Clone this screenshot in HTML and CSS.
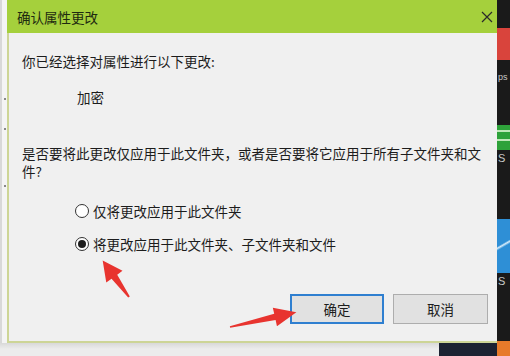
FILE: index.html
```html
<!DOCTYPE html>
<html lang="zh-CN">
<head>
<meta charset="utf-8">
<title>确认属性更改</title>
<link rel="stylesheet" href="styles.css">
</head>
<body>
<div class="screen">
  <div class="left-strip"><span class="tick t1"></span><span class="tick t2"></span><span class="tick t3"></span></div>
  <div class="dialog">
    <div class="titlebar">
      <span class="title">确认属性更改</span>
      <svg class="close" width="12" height="12" viewBox="0 0 12 12"><path d="M1 1L11 11M11 1L1 11" stroke="#2a2a2a" stroke-width="1.2" fill="none"/></svg>
    </div>
    <div class="content">
      <p class="line first">你已经选择对属性进行以下更改:</p>
      <p class="line attr">加密</p>
      <p class="line question">是否要将此更改仅应用于此文件夹，或者是否要将它应用于所有子文件夹和文件?</p>
      <div class="options">
        <label class="option"><span class="radio"></span><span>仅将更改应用于此文件夹</span></label>
        <label class="option"><span class="radio checked"></span><span>将更改应用于此文件夹、子文件夹和文件</span></label>
      </div>
      <div class="buttons">
        <button class="btn default">确定</button>
        <button class="btn">取消</button>
      </div>
    </div>
  </div>
  <div class="right-strip">
    <div class="blk dark h28"></div>
    <div class="blk red h32"></div>
    <div class="blk dark h65"><span class="frag">ps</span></div>
    <div class="blk green h25"></div>
    <div class="blk dark h69"><span class="frag s1">S</span></div>
    <div class="blk blue h54"></div>
    <div class="blk dark h68"><span class="frag s1">S</span></div>
    <div class="blk orange fill"></div>
  </div>
  <div class="bottom-row">
    <div class="floor"></div>
    <div class="floor-dark"></div>
  </div>
</div>
<svg class="arrows" width="510" height="356" viewBox="0 0 510 356">
  <polygon transform="translate(129 297) rotate(-125.8)" points="0,-1 25,-3.5 25,-10 45,0 25,10 25,3.5 0,1" fill="#e8342f"/>
  <polygon transform="translate(230 327) rotate(-12.6)" points="0,-0.8 46,-3.2 46,-9.5 68,0 46,9.5 46,3.2 0,0.8" fill="#e8342f"/>
</svg>
</body>
</html>
```

FILE: styles.css
```css
* { box-sizing: border-box; }
html, body { margin: 0; padding: 0; }
body {
  width: 510px;
  height: 356px;
  overflow: hidden;
  background: #ececec;
  font-family: "Noto Sans CJK SC", "Noto Sans", sans-serif;
  font-size: 13.5px;
  color: #1c1c1c;
  position: relative;
}
.screen {
  display: grid;
  grid-template-columns: 7px 490px 13px;
  grid-template-rows: 343px 13px;
  width: 510px;
  height: 356px;
}
.left-strip {
  background: #f4f4f4;
  border-left: 2px solid #d8d8d8;
  display: flex;
  flex-direction: column;
  align-items: flex-end;
}
.tick { width: 2px; height: 2px; background: #888; margin-right: 1px; }
.t1 { margin-top: 98px; }
.t2 { margin-top: 28px; }
.t3 { margin-top: 55px; }
.dialog {
  display: flex;
  flex-direction: column;
  background: #f0f0f0;
  border-left: 2px solid #cdd596;
  border-bottom: 2px solid #cdd596;
}
.titlebar {
  height: 33px;
  flex: none;
  background: #a5d03c;
  display: flex;
  align-items: center;
  justify-content: space-between;
  margin-left: -2px;
  padding: 0 4px 0 10px;
}
.title { color: #1e2a10; line-height: 18px; }
.close { display: block; }
.content {
  flex: 1;
  display: flex;
  flex-direction: column;
  padding-left: 13px;
  padding-right: 9px;
}
.line { margin: 0; line-height: 18px; }
.first { margin-top: 19px; }
.attr { margin-top: 18px; margin-left: 55px; }
.question { margin-top: 38px; width: 460px; }
.options { display: flex; flex-direction: column; gap: 15px; margin-top: 22px; margin-left: 53px; }
.option { display: flex; align-items: center; gap: 4px; line-height: 18px; }
.radio {
  width: 14px;
  height: 14px;
  border: 1px solid #333;
  border-radius: 50%;
  background: #fff;
  display: flex;
  align-items: center;
  justify-content: center;
}
.radio.checked::after {
  content: "";
  width: 8px;
  height: 8px;
  border-radius: 50%;
  background: #1e1e1e;
}
.buttons {
  display: flex;
  justify-content: flex-end;
  gap: 9px;
  margin-top: 41px;
}
.btn {
  width: 95px;
  height: 30px;
  background: #e1e1e1;
  border: 1px solid #adadad;
  font-family: inherit;
  font-size: 13.5px;
  color: #1c1c1c;
  padding: 0;
}
.btn.default { border: 2px solid #2f7fd0; width: 94px; }
.right-strip {
  grid-row: 1 / 3;
  grid-column: 3;
  display: flex;
  flex-direction: column;
  background: #1a1a1a;
}
.blk { flex: none; position: relative; overflow: hidden; }
.dark { background: #1a1a1a; }
.red { background: #d9443c; }
.green { background: linear-gradient(#2ea23a 0 5px, #bfe8b8 5px 7px, #2ea23a 7px 14px, #bfe8b8 14px 16px, #2ea23a 16px); }
.blue { background: linear-gradient(150deg, #2e8fd6 45%, #d8ecfa 48%, #2e8fd6 52%); }
.orange { background: #e77a2a; }
.fill { flex: 1; }
.h28 { height: 28px; }
.h32 { height: 32px; }
.h65 { height: 65px; }
.h25 { height: 25px; }
.h69 { height: 69px; }
.h54 { height: 54px; }
.h68 { height: 68px; }
.frag { display: block; color: #c8c8c8; font-size: 9px; line-height: 11px; margin-top: 12px; margin-left: 1px; font-family: "Liberation Sans", sans-serif; }
.frag.s1 { margin-top: 2px; margin-left: 1px; font-size: 11px; line-height: 12px; }
.bottom-row {
  grid-row: 2;
  grid-column: 1 / 3;
  display: flex;
}
.floor { flex: 1; background: linear-gradient(#d9d9d9, #ececec 6px); }
.floor-dark { width: 58px; background: #1c2232; }
.arrows { position: absolute; left: 0; top: 0; pointer-events: none; }
```
